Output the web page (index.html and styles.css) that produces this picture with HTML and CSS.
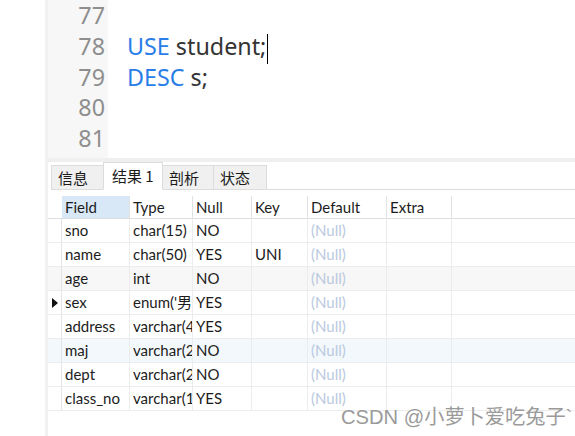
FILE: index.html
```html
<!DOCTYPE html>
<html>
<head>
<meta charset="utf-8">
<link rel="stylesheet" href="styles.css">
</head>
<body>
<div class="app">
  <div class="margin"></div>
  <div class="main">
    <div class="editor">
      <div class="gutter">
        <div class="ln">77</div>
        <div class="ln">78</div>
        <div class="ln">79</div>
        <div class="ln">80</div>
        <div class="ln">81</div>
      </div>
      <div class="code">
        <div class="line"></div>
        <div class="line"><span class="kw">USE</span> student;<span class="caret"></span></div>
        <div class="line"><span class="kw">DESC</span> s;</div>
        <div class="line"></div>
        <div class="line"></div>
      </div>
    </div>
    <div class="split"></div>
    <div class="tabs">
      <div class="tab">信息</div>
      <div class="tab active">结果 1</div>
      <div class="tab">剖析</div>
      <div class="tab">状态</div>
      <div class="tabfill"></div>
    </div>
    <div class="grid">
      <div class="row head">
        <div class="rh"></div>
        <div class="c c1 sel">Field</div>
        <div class="c c2">Type</div>
        <div class="c c3">Null</div>
        <div class="c c4">Key</div>
        <div class="c c5">Default</div>
        <div class="c c6">Extra</div>
      </div>
      <div class="row">
        <div class="rh"></div>
        <div class="c c1">sno</div><div class="c c2">char(15)</div><div class="c c3">NO</div><div class="c c4"></div><div class="c c5 null">(Null)</div><div class="c c6"></div>
      </div>
      <div class="row">
        <div class="rh"></div>
        <div class="c c1">name</div><div class="c c2">char(50)</div><div class="c c3">YES</div><div class="c c4">UNI</div><div class="c c5 null">(Null)</div><div class="c c6"></div>
      </div>
      <div class="row gray">
        <div class="rh"></div>
        <div class="c c1">age</div><div class="c c2">int</div><div class="c c3">NO</div><div class="c c4"></div><div class="c c5 null">(Null)</div><div class="c c6"></div>
      </div>
      <div class="row cur">
        <div class="rh"><span class="tri"></span></div>
        <div class="c c1">sex</div><div class="c c2">enum('男</div><div class="c c3">YES</div><div class="c c4"></div><div class="c c5 null">(Null)</div><div class="c c6"></div>
      </div>
      <div class="row">
        <div class="rh"></div>
        <div class="c c1">address</div><div class="c c2">varchar(4</div><div class="c c3">YES</div><div class="c c4"></div><div class="c c5 null">(Null)</div><div class="c c6"></div>
      </div>
      <div class="row blue">
        <div class="rh"></div>
        <div class="c c1">maj</div><div class="c c2">varchar(2</div><div class="c c3">NO</div><div class="c c4"></div><div class="c c5 null">(Null)</div><div class="c c6"></div>
      </div>
      <div class="row">
        <div class="rh"></div>
        <div class="c c1">dept</div><div class="c c2">varchar(2</div><div class="c c3">NO</div><div class="c c4"></div><div class="c c5 null">(Null)</div><div class="c c6"></div>
      </div>
      <div class="row">
        <div class="rh"></div>
        <div class="c c1">class_no</div><div class="c c2">varchar(1</div><div class="c c3">YES</div><div class="c c4"></div><div class="c c5 null">(Null)</div><div class="c c6"></div>
      </div>
    </div>
  </div>
</div>
<div class="watermark">CSDN @小萝卜爱吃兔子`</div>
</body>
</html>
```
FILE: styles.css
```css
html, body {
  margin: 0;
  padding: 0;
  width: 575px;
  height: 436px;
  overflow: hidden;
  background: #ffffff;
}
body {
  position: relative;
  font-family: "Noto Sans", "Noto Sans CJK SC", sans-serif;
}
.app {
  display: flex;
  height: 436px;
}
.margin {
  width: 45px;
  flex: none;
}
.main {
  flex: 1;
  border-left: 3px solid #f1f1f1;
  display: flex;
  flex-direction: column;
  min-width: 0;
}
.editor {
  display: flex;
  height: 158px;
  background: #ffffff;
}
.gutter {
  width: 60px;
  background: #f7f7f7;
  flex: none;
  padding-right: 3px;
  box-sizing: border-box;
}
.ln, .line {
  height: 30.75px;
  line-height: 30.75px;
  font-size: 23.3px;
}
.ln {
  text-align: right;
  color: #8e8e8e;
}
.code {
  padding-left: 19px;
  color: #333333;
}
.kw {
  color: #2a7ee8;
}
.caret {
  display: inline-block;
  width: 1px;
  height: 30px;
  background: #000;
  vertical-align: middle;
  margin-left: 1px;
}
.split {
  height: 4px;
  background: #efefef;
}
.tabs {
  display: flex;
  align-items: flex-end;
  height: 28px;
  padding-left: 3px;
  font-family: "Noto Sans CJK SC", sans-serif;
  font-size: 15px;
  color: #1a1a1a;
}
.tab {
  height: 25px;
  line-height: 23px;
  box-sizing: border-box;
  background: #f0f0f0;
  border: 1px solid #dcdcdc;
  padding: 0 6px;
  margin-right: -1px;
}
.tab:nth-child(1) { width: 53px; }
.tab:nth-child(3) { width: 52px; }
.tab:nth-child(4) { width: 54px; }
.tab.active {
  width: 60px;
  height: 28px;
  line-height: 26px;
  background: #ffffff;
  border-bottom: 1px solid #ffffff;
  padding-left: 8px;
  position: relative;
  z-index: 1;
}
.tabfill {
  flex: 1;
  height: 1px;
  background: #dcdcdc;
}
.grid {
  margin-top: 6px;
  font-family: "Lato", "Noto Sans CJK SC", sans-serif;
  font-size: 15px;
  color: #1c1c1c;
}
.row {
  display: flex;
  height: 24px;
  border-bottom: 1px solid #ececec;
  box-sizing: border-box;
}
.row.head {
  height: 23px;
  border-bottom: 1px solid #dedede;
}
.row.gray { background: #f7f7f7; }
.row.blue { background: #f3f8fd; }
.rh {
  width: 14px;
  flex: none;
  border-right: 1px solid #e4e4e4;
  box-sizing: border-box;
  display: flex;
  align-items: center;
  justify-content: center;
}
.row.cur .rh { background: #ffffff; }
.row.head .rh { border-right: none; }
.tri {
  width: 0;
  height: 0;
  border-top: 5px solid transparent;
  border-bottom: 5px solid transparent;
  border-left: 6px solid #111;
  margin-left: 1px;
}
.c {
  box-sizing: border-box;
  border-right: 1px solid #ececec;
  padding-left: 3px;
  line-height: 23px;
  white-space: nowrap;
  overflow: hidden;
  flex: none;
}
.row.head .c { border-right-color: #e2e2e2; line-height: 22px; }
.c1 { width: 68px; }
.c2 { width: 63px; }
.c3 { width: 59px; }
.c4 { width: 56px; }
.c5 { width: 79px; }
.c6 { width: 65px; }
.c.sel { background: #d9e8f7; }
.null { color: #bac9dd; }
.watermark {
  position: absolute;
  left: 341px;
  top: 401px;
  font-size: 20.2px;
  color: #9a9a9a;
  font-family: "Liberation Sans", "Noto Sans CJK SC", sans-serif;
  text-shadow: 0 0 1px #ffffff;
  white-space: nowrap;
}
```
